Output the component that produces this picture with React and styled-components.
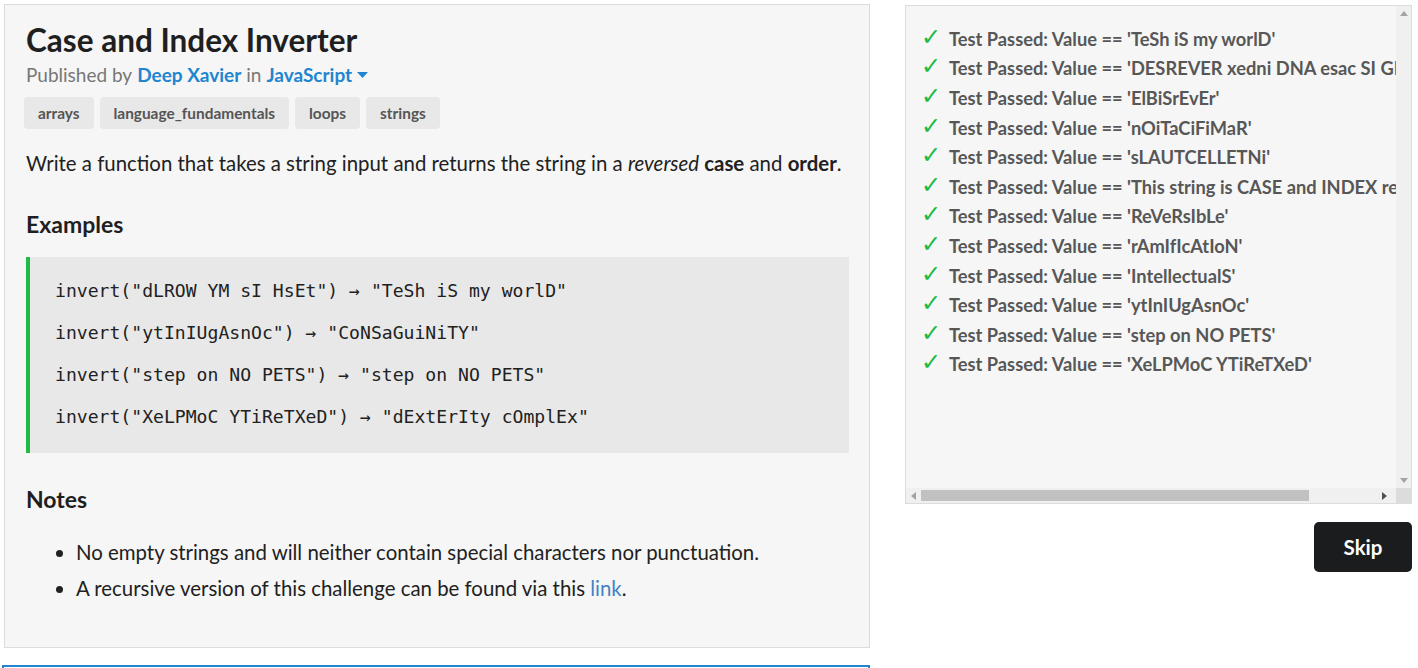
import styled, { createGlobalStyle } from "styled-components";

const GlobalStyle = createGlobalStyle`
  body {
    margin: 0;
    background: #ffffff;
    font-family: Lato, "Noto Sans", sans-serif;
    color: #212121;
  }
`;

const Page = styled.div`
  display: flex;
  flex-direction: row;
  align-items: flex-start;
  gap: 35px;
  padding: 4px 0 0 4px;
  height: 664px;
  overflow: hidden;
`;

const LeftColumn = styled.div`
  width: 866px;
  display: flex;
  flex-direction: column;
`;

const Panel = styled.div`
  box-sizing: border-box;
  height: 644px;
  background: #f6f6f6;
  border: 1px solid #dcdcdc;
  padding: 17px 21px 0 21px;
`;

const Title = styled.h1`
  margin: 0;
  font-size: 31.5px;
  line-height: 36px;
  font-weight: 700;
  color: #1f1f1f;
`;

const Meta = styled.div`
  margin-top: 5px;
  font-size: 19px;
  line-height: 24px;
  color: #777777;
  display: flex;
  align-items: center;
  gap: 5px;
`;

const MetaLink = styled.span`
  color: #2185d0;
  font-weight: 700;
`;

const Tags = styled.div`
  display: flex;
  gap: 6px;
  margin-top: 10px;
  margin-left: -2px;
`;

const Tag = styled.span`
  height: 32px;
  padding: 0 14px;
  display: flex;
  align-items: center;
  background: #e8e8e8;
  border-radius: 4px;
  font-size: 15.4px;
  font-weight: 700;
  color: #555555;
`;

const Description = styled.p`
  margin: 21px 0 0 0;
  font-size: 20.4px;
  line-height: 26px;
  color: #212121;
`;

const Heading = styled.h2`
  margin: ${(p) => p.$top}px 0 0 0;
  font-size: 23px;
  line-height: 28px;
  font-weight: 700;
  color: #1f1f1f;
`;

const CodeBlock = styled.div`
  margin-top: 19px;
  margin-right: -1px;
  background: #e8e8e8;
  border-left: 4px solid #21ba45;
  padding: 13px 0 15px 25px;
`;

const CodeLine = styled.div`
  font-family: "DejaVu Sans Mono", monospace;
  font-size: 18.1px;
  line-height: 42px;
  color: #212121;
  white-space: pre;
`;

const NoteList = styled.ul`
  margin: 26px 0 0 0;
  padding-left: 50px;
  display: flex;
  flex-direction: column;
  gap: 10px;
`;

const NoteItem = styled.li`
  font-size: 20.4px;
  line-height: 26px;
  color: #212121;
`;

const TextLink = styled.a`
  color: #4183c4;
  text-decoration: none;
`;

const NextBox = styled.div`
  margin-top: 17px;
  margin-left: -2px;
  height: 40px;
  border: 2px solid #2185d0;
  background: #ffffff;
`;

const RightColumn = styled.div`
  width: 507px;
  display: flex;
  flex-direction: column;
  align-items: flex-end;
  padding-top: 1px;
`;

/* output box: a viewport plus drawn scrollbars */
const Output = styled.div`
  box-sizing: border-box;
  width: 507px;
  height: 499px;
  background: #f6f6f6;
  border: 1px solid #dcdcdc;
  display: grid;
  grid-template-columns: 1fr 15px;
  grid-template-rows: 1fr 15px;
`;

const Viewport = styled.div`
  overflow: hidden;
  padding: 18px 0 0 15px;
`;

const VBar = styled.div`
  background: #f0f0f0;
  display: flex;
  flex-direction: column;
  justify-content: space-between;
  align-items: center;
  padding: 5px 0;
`;

const HBar = styled.div`
  background: #f0f0f0;
  display: flex;
  align-items: center;
  padding: 0 4px 0 0;
`;

const ArrowCell = styled.div`
  width: 15px;
  height: 15px;
  display: flex;
  align-items: center;
  justify-content: center;
  flex-shrink: 0;
`;

const Arrow = styled.span`
  width: 0;
  height: 0;
  border-style: solid;
  border-color: transparent;
  ${(p) =>
    p.$dir === "up"
      ? `border-width: 0 4px 5px 4px; border-bottom-color: ${p.$color};`
      : p.$dir === "down"
      ? `border-width: 5px 4px 0 4px; border-top-color: ${p.$color};`
      : p.$dir === "left"
      ? `border-width: 4px 5px 4px 0; border-right-color: ${p.$color};`
      : `border-width: 4px 0 4px 5px; border-left-color: ${p.$color};`}
`;

const Track = styled.div`
  flex: 1;
  height: 11px;
  display: flex;
  align-items: center;
`;

const Thumb = styled.div`
  height: 11px;
  background: #c1c1c1;
`;

const Corner = styled.div`
  background: #dcdcdc;
`;

const TestRow = styled.div`
  display: flex;
  align-items: center;
  white-space: nowrap;
  height: 29.6px;
  font-size: 18.3px;
  font-weight: 700;
  color: #575757;
  width: max-content;
`;

const Check = styled.span`
  width: 28px;
  color: #21ba45;
  font-family: "DejaVu Sans", sans-serif;
  font-size: 24px;
  font-weight: 700;
  line-height: 1;
  position: relative;
  top: -2px;
`;

const SkipButton = styled.button`
  margin-top: 18px;
  width: 98px;
  height: 50px;
  border: none;
  border-radius: 5px;
  background: #1b1c1d;
  color: #ffffff;
  font-family: Lato, sans-serif;
  font-size: 20.5px;
  font-weight: 700;
`;

const tests = [
  "TeSh iS my worlD",
  "DESREVER xedni DNA esac SI GNIRTS sihT",
  "ElBiSrEvEr",
  "nOiTaCiFiMaR",
  "sLAUTCELLETNi",
  "This string is CASE and INDEX reversed",
  "ReVeRsIbLe",
  "rAmIfIcAtIoN",
  "IntellectualS",
  "ytInIUgAsnOc",
  "step on NO PETS",
  "XeLPMoC YTiReTXeD",
];

const examples = [
  'invert("dLROW YM sI HsEt") \u2192 "TeSh iS my worlD"',
  'invert("ytInIUgAsnOc") \u2192 "CoNSaGuiNiTY"',
  'invert("step on NO PETS") \u2192 "step on NO PETS"',
  'invert("XeLPMoC YTiReTXeD") \u2192 "dExtErIty cOmplEx"',
];

function Caret() {
  return (
    <svg width="11" height="7" viewBox="0 0 11 7">
      <path d="M0 0 L11 0 L5.5 6 Z" fill="#2185d0" />
    </svg>
  );
}

function App() {
  const thumbRatio = 0.85;
  return (
    <>
      <GlobalStyle />
      <Page>
        <LeftColumn>
          <Panel>
            <Title>Case and Index Inverter</Title>
            <Meta>
              Published by <MetaLink>Deep Xavier</MetaLink> in{" "}
              <MetaLink>JavaScript</MetaLink>
              <Caret />
            </Meta>
            <Tags>
              <Tag>arrays</Tag>
              <Tag>language_fundamentals</Tag>
              <Tag>loops</Tag>
              <Tag>strings</Tag>
            </Tags>
            <Description>
              Write a function that takes a string input and returns the string
              in a <em>reversed</em> <strong>case</strong> and{" "}
              <strong>order</strong>.
            </Description>
            <Heading $top={34}>Examples</Heading>
            <CodeBlock>
              {examples.map((line, i) => (
                <CodeLine key={i}>{line}</CodeLine>
              ))}
            </CodeBlock>
            <Heading $top={32}>Notes</Heading>
            <NoteList>
              <NoteItem>
                No empty strings and will neither contain special characters
                nor punctuation.
              </NoteItem>
              <NoteItem>
                A recursive version of this challenge can be found via this{" "}
                <TextLink href="#">link</TextLink>.
              </NoteItem>
            </NoteList>
          </Panel>
          <NextBox />
        </LeftColumn>
        <RightColumn>
          <Output>
            <Viewport>
              {tests.map((t, i) => (
                <TestRow key={i}>
                  <Check>✓</Check>
                  Test Passed: Value == '{t}'
                </TestRow>
              ))}
            </Viewport>
            <VBar>
              <Arrow $dir="up" $color="#a3a3a3" />
              <Arrow $dir="down" $color="#a3a3a3" />
            </VBar>
            <HBar>
              <ArrowCell>
                <Arrow $dir="left" $color="#a3a3a3" />
              </ArrowCell>
              <Track>
                <Thumb style={{ width: `${thumbRatio * 100}%` }} />
              </Track>
              <ArrowCell>
                <Arrow $dir="right" $color="#505050" />
              </ArrowCell>
            </HBar>
            <Corner />
          </Output>
          <SkipButton>Skip</SkipButton>
        </RightColumn>
      </Page>
    </>
  );
}

export default App;
